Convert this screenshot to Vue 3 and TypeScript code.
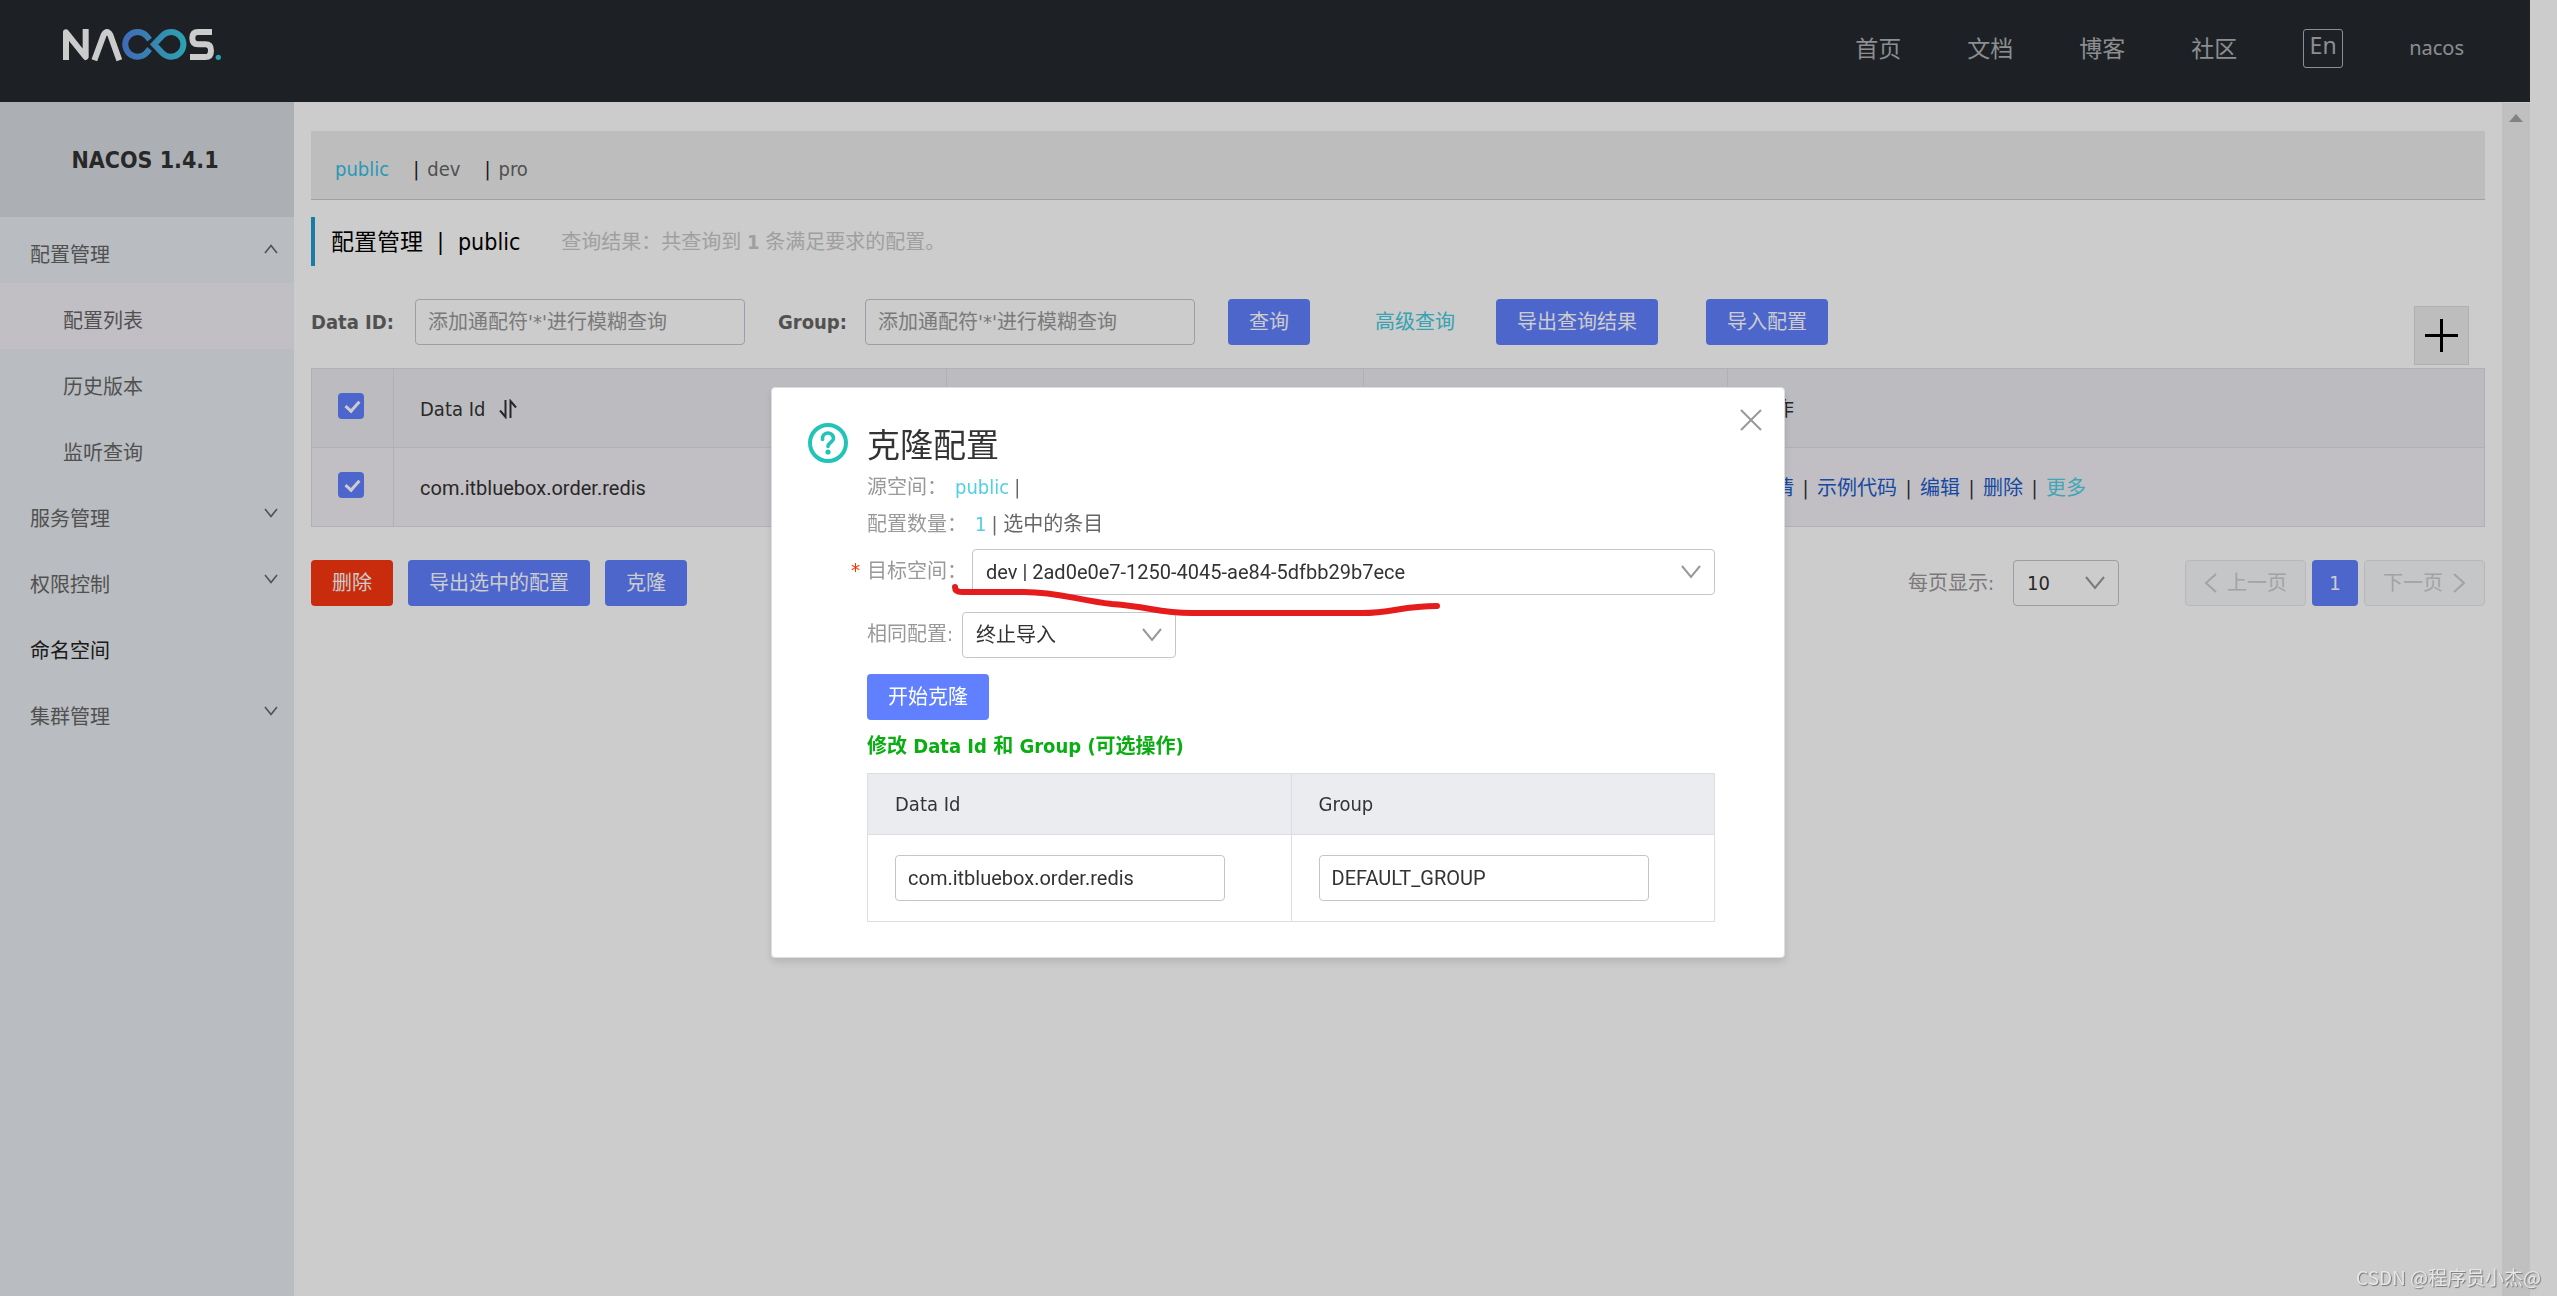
<script setup lang="ts">
import { ref } from 'vue'

interface MenuItem {
  label: string
  kind: 'group' | 'child' | 'plain'
  open?: boolean
  active?: boolean
}

const menu: MenuItem[] = [
  { label: '配置管理', kind: 'group', open: true },
  { label: '配置列表', kind: 'child', active: true },
  { label: '历史版本', kind: 'child' },
  { label: '监听查询', kind: 'child' },
  { label: '服务管理', kind: 'group' },
  { label: '权限控制', kind: 'group' },
  { label: '命名空间', kind: 'plain' },
  { label: '集群管理', kind: 'group' },
]

const navLinks: string[] = ['首页', '文档', '博客', '社区']
const rowActions: string[] = ['详情', '示例代码', '编辑', '删除']

const dataId = ref('')
const group = ref('')
const allChecked = ref(true)
const rowChecked = ref(true)
const pageSize = ref('10')
const targetSpace = ref('dev | 2ad0e0e7-1250-4045-ae84-5dfbb29b7ece')
const policy = ref('终止导入')
const cloneDataId = ref('com.itbluebox.order.redis')
const cloneGroup = ref('DEFAULT_GROUP')
</script>

<template>
  <div class="page">
    <div class="shell">
      <header class="topbar">
        <a href="#" class="logo" aria-label="NACOS">
          <svg width="200" height="70" viewBox="0 0 600 210" fill="none" stroke-width="18">
            <defs>
              <linearGradient id="loop" gradientUnits="userSpaceOnUse" x1="245" y1="0" x2="442" y2="0">
                <stop offset="0" stop-color="#5284e6" />
                <stop offset="1" stop-color="#36cddb" />
              </linearGradient>
            </defs>
            <g stroke="#fff" stroke-linejoin="round">
              <path d="M78 150V67L137 141V57" />
              <path d="M163 151L191 75Q201 57 211 75L238 151" />
              <path d="M516 66H474Q457 66 457 84Q457 103 474 103H496Q513 103 513 122Q513 141 496 141H450" />
            </g>
            <g stroke="url(#loop)">
              <path d="M329 89L319 77A37 37 0 1 0 319 129L329 117" />
              <path d="M342 103L368 76A37 37 0 1 1 368 130Z" />
            </g>
            <circle cx="535" cy="142" r="8" fill="#36cddb" />
          </svg>
        </a>
        <nav class="topnav">
          <a v-for="l in navLinks" :key="l" href="#">{{ l }}</a>
          <button type="button" class="lang">En</button>
          <a href="#" class="user">nacos</a>
        </nav>
      </header>

      <div class="columns">
        <aside class="sidebar">
          <h1>NACOS 1.4.1</h1>
          <ul>
            <li v-for="m in menu" :key="m.label" :class="[m.kind, { active: m.active }]">
              <a href="#">{{ m.label }}</a>
              <svg v-if="m.kind === 'group'" width="14" height="10" viewBox="0 0 14 10" fill="none" stroke="#666" stroke-width="1.6">
                <path :d="m.open ? 'M1 9L7 1.5L13 9' : 'M1 1L7 8.500L13 1'" />
              </svg>
            </li>
          </ul>
        </aside>

        <main class="content">
          <div class="spaces">
            <a href="#" class="current">public</a>
            <span class="bar">|</span><a href="#">dev</a>
            <span class="bar">|</span><a href="#">pro</a>
          </div>

          <div class="heading">
            <h2>配置管理<span class="sep">|</span>public</h2>
            <p>查询结果：共查询到 <b>1</b> 条满足要求的配置。</p>
          </div>

          <form class="filters" @submit.prevent>
            <label for="f-data">Data ID:</label>
            <input id="f-data" v-model="dataId" class="field" type="text" placeholder="添加通配符'*'进行模糊查询" />
            <label for="f-group" class="l2">Group:</label>
            <input id="f-group" v-model="group" class="field" type="text" placeholder="添加通配符'*'进行模糊查询" />
            <button type="submit" class="btn b1">查询</button>
            <a href="#" class="more">高级查询</a>
            <button type="button" class="btn">导出查询结果</button>
            <button type="button" class="btn b2">导入配置</button>
            <button type="button" class="plus" aria-label="新建配置">
              <svg width="33" height="33" viewBox="0 0 33 33" stroke="#000" stroke-width="3"><path d="M16.500 0V33M0 16.500H33" /></svg>
            </button>
          </form>

          <table class="grid">
            <colgroup>
              <col class="c-check" /><col class="c-id" /><col class="c-group" /><col class="c-app" /><col />
            </colgroup>
            <thead>
              <tr>
                <th class="tick"><input v-model="allChecked" type="checkbox" aria-label="全选" /></th>
                <th>
                  Data Id
                  <svg class="sort" width="18" height="20" viewBox="0 0 18 20" fill="none" stroke="#333" stroke-width="2">
                    <path d="M6.500 1V18L1 11.500M11.500 19V2L17 8.500" />
                  </svg>
                </th>
                <th></th>
                <th></th>
                <th>操作</th>
              </tr>
            </thead>
            <tbody>
              <tr>
                <td class="tick"><input v-model="rowChecked" type="checkbox" aria-label="选择" /></td>
                <td class="value">com.itbluebox.order.redis</td>
                <td></td>
                <td></td>
                <td>
                  <div class="actions">
                    <template v-for="a in rowActions" :key="a"><a href="#">{{ a }}</a><span>|</span></template>
                    <a href="#" class="cyan">更多</a>
                  </div>
                </td>
              </tr>
            </tbody>
          </table>

          <div class="footer">
            <button type="button" class="btn danger">删除</button>
            <button type="button" class="btn">导出选中的配置</button>
            <button type="button" class="btn">克隆</button>
            <div class="pager">
              <label for="size">每页显示:</label>
              <div class="select size">
                <select id="size" v-model="pageSize"><option>10</option></select>
                <svg width="20" height="14" viewBox="0 0 20 14" fill="none" stroke="#999" stroke-width="2"><path d="M1 1L10 12L19 1" /></svg>
              </div>
              <button type="button" class="page-btn" disabled>
                <svg width="13" height="20" viewBox="0 0 13 20" fill="none" stroke="#ccc" stroke-width="2"><path d="M12 1L2 10L12 19" /></svg>
                上一页
              </button>
              <button type="button" class="page-btn on">1</button>
              <button type="button" class="page-btn" disabled>
                下一页
                <svg width="13" height="20" viewBox="0 0 13 20" fill="none" stroke="#ccc" stroke-width="2"><path d="M1 1L11 10L1 19" /></svg>
              </button>
            </div>
          </div>
        </main>

        <div class="track">
          <svg width="14" height="8" viewBox="0 0 14 8" fill="#a3a3a3"><path d="M7 0L14 8H0Z" /></svg>
        </div>
      </div>
    </div>

    <div class="backdrop">
      <section class="dialog" role="dialog" aria-labelledby="dlg-title">
        <svg class="help" width="40" height="40" viewBox="0 0 40 40" fill="none" stroke="#23c4b8">
          <circle cx="20" cy="20" r="18" stroke-width="4" />
          <path d="M14.500 16.500V15.500A5.500 5.500 0 0 1 25.500 15.500C25.500 19 20 19.500 20 23.500" stroke-width="3.600" stroke-linecap="round" />
          <circle cx="20" cy="29" r="2.600" fill="#23c4b8" stroke="none" />
        </svg>
        <div class="body">
          <h3 id="dlg-title">克隆配置</h3>
          <div class="line"><span class="k">源空间：</span><span class="cyan num">public</span><span class="v">|</span></div>
          <div class="line"><span class="k">配置数量：</span><span class="cyan num">1</span><span class="v">| 选中的条目</span></div>
          <div class="row target">
            <span class="star">*</span>
            <label for="target">目标空间：</label>
            <div class="select wide">
              <select id="target" v-model="targetSpace" class="value"><option>dev | 2ad0e0e7-1250-4045-ae84-5dfbb29b7ece</option></select>
              <svg width="20" height="14" viewBox="0 0 20 14" fill="none" stroke="#999" stroke-width="2"><path d="M1 1L10 12L19 1" /></svg>
            </div>
          </div>
          <div class="row">
            <label for="policy">相同配置:</label>
            <div class="select policy">
              <select id="policy" v-model="policy"><option>终止导入</option></select>
              <svg width="20" height="14" viewBox="0 0 20 14" fill="none" stroke="#999" stroke-width="2"><path d="M1 1L10 12L19 1" /></svg>
            </div>
          </div>
          <button type="button" class="btn">开始克隆</button>
          <p class="hint">修改 Data Id 和 Group (可选操作)</p>
          <table class="edit">
            <thead>
              <tr><th>Data Id</th><th>Group</th></tr>
            </thead>
            <tbody>
              <tr>
                <td><input v-model="cloneDataId" class="field value" type="text" aria-label="Data Id" /></td>
                <td><input v-model="cloneGroup" class="field value" type="text" aria-label="Group" /></td>
              </tr>
            </tbody>
          </table>
        </div>
        <button type="button" class="close" aria-label="关闭">
          <svg width="22" height="22" viewBox="0 0 22 22" stroke="#999" stroke-width="2"><path d="M1 1L21 21M21 1L1 21" /></svg>
        </button>
        <svg class="scribble" width="500" height="40" viewBox="0 0 500 40" fill="none" stroke="#e61c1c" stroke-width="6" stroke-linecap="round">
          <path d="M3 10Q3 15 10 15H72C106 15 125 23 160 27C200 30 205 36 240 36H410C440 36 450 29 485 29" />
        </svg>
      </section>
    </div>

    <div class="mark">CSDN @程序员小杰@</div>
  </div>
</template>

<style>
body {
  margin: 0;
  background: #fff;
}
</style>

<style scoped>
.page,
.page button,
.page input,
.page select {
  font-family: "DejaVu Sans Condensed", "Noto Sans CJK SC", sans-serif;
  font-size: 20px;
  line-height: 28px;
}
.page .value {
  font-family: Roboto, "Noto Sans CJK SC", sans-serif;
}
.page *,
.page {
  box-sizing: border-box;
}
.page {
  color: #333;
}
a {
  color: inherit;
  text-decoration: none;
}
h1,
h2,
h3,
p,
ul {
  margin: 0;
  padding: 0;
}
svg {
  display: block;
  flex: none;
}
button {
  padding: 0;
  border: 0;
  background: none;
  cursor: pointer;
}
.shell {
  display: flex;
  flex-direction: column;
  min-height: 100vh;
  margin-right: 27px;
}
.topbar {
  display: flex;
  justify-content: space-between;
  height: 102px;
  padding: 10px 66px 0 40px;
  background: #252a2f;
}
.topnav {
  display: flex;
  align-items: center;
  gap: 66px;
  height: 76px;
  color: #b0b2b4;
}
.topnav a,
.topnav .lang {
  font-family: "Noto Sans", "Noto Sans CJK SC", sans-serif;
  font-size: 23px;
}
.topnav .user {
  font-size: 20px;
}
.topnav .lang {
  width: 40px;
  height: 39px;
  padding-bottom: 6px;
  border: 1px solid #b0b2b4;
  border-radius: 3px;
  color: #b0b2b4;
}
.columns {
  display: flex;
  flex: 1;
}
.sidebar {
  flex: none;
  width: 294px;
  background: #e8ecf0;
}
.sidebar h1 {
  height: 115px;
  padding-right: 4px;
  background: #d8dde3;
  font-size: 23px;
  line-height: 116px;
  text-align: center;
}
.sidebar ul {
  list-style: none;
}
.sidebar li {
  display: flex;
  align-items: center;
  justify-content: space-between;
  height: 66px;
  padding: 9px 16px 0 30px;
  color: #666;
}
.sidebar li svg {
  margin-bottom: 12px;
}
.sidebar li.child {
  padding-left: 63px;
}
.sidebar li.plain {
  color: #222;
}
.sidebar li.active {
  background: #f2eff6;
}
.content {
  flex: 1;
  min-width: 0;
  padding: 29px 17px 0;
}
.spaces {
  display: flex;
  align-items: center;
  height: 69px;
  padding: 7px 24px 0;
  border-bottom: 1px solid #c8c8c8;
  background: #ededed;
  color: #666;
}
.spaces .current {
  color: #33c0e5;
}
.spaces .bar {
  margin: 0 8px 0 24px;
  color: #222;
}
.heading {
  display: flex;
  align-items: center;
  gap: 41px;
  height: 49px;
  margin-top: 17px;
  padding-left: 16px;
  border-left: 4px solid #209bcf;
}
.heading h2 {
  font-size: 23px;
  font-weight: 400;
  color: #000;
}
.heading .sep {
  margin: 0 14px;
}
.heading p {
  color: #c8c8c8;
}
.filters {
  display: flex;
  align-items: flex-start;
  height: 81px;
  margin-top: 21px;
  padding-top: 12px;
}
.filters label {
  width: 104px;
  color: #666;
  font-weight: 700;
}
.filters label,
.filters .more {
  line-height: 47px;
}
.filters .l2 {
  width: 87px;
  margin-left: 33px;
}
.field {
  width: 330px;
  height: 46px;
  padding: 0 12px;
  border: 1px solid #c4c6cf;
  border-radius: 4px;
  background: transparent;
  color: #333;
  outline: none;
}
.field::placeholder {
  color: #999;
  opacity: 1;
}
.btn {
  height: 46px;
  padding: 0 21px;
  border-radius: 4px;
  background: #6080ff;
  color: #fff;
  white-space: nowrap;
}
.btn.danger {
  background: #fa3810;
}
.filters .b1 {
  margin-left: 33px;
}
.filters .b2 {
  margin-left: 48px;
}
.filters .more {
  margin: 0 41px 0 65px;
  color: #45cbe0;
}
.filters .plus {
  display: flex;
  align-items: center;
  justify-content: center;
  align-self: flex-end;
  width: 55px;
  height: 59px;
  margin: 0 16px 3px auto;
  border: 1px solid #dcdcdc;
  background: #ededed;
}
table {
  width: 100%;
  table-layout: fixed;
  border-collapse: collapse;
}
th,
td {
  border: 1px solid #dcdee3;
  text-align: left;
  font-weight: 400;
}
th {
  background: #ebecf0;
}
.grid th,
.grid td {
  height: 79px;
  padding: 2px 26px 0;
}
.grid td {
  background: #f2eff6;
}
.c-check {
  width: 82px;
}
.c-id {
  width: 553px;
}
.c-group {
  width: 417px;
}
.c-app {
  width: 364px;
}
.sort {
  display: inline-block;
  margin-left: 8px;
  vertical-align: -3px;
}
.grid .tick {
  padding: 0 0 5px 26px;
}
.tick input {
  display: block;
  appearance: none;
  width: 26px;
  height: 26px;
  margin: 0;
  border-radius: 4px;
  background: #6080ff;
}
.tick input:checked::after {
  content: "";
  display: block;
  width: 6px;
  height: 11px;
  margin: 5px 0 0 10px;
  border: solid #fff;
  border-width: 0 3px 3px 0;
  transform: rotate(42deg);
}
.actions {
  display: flex;
  gap: 8px;
  white-space: nowrap;
}
.actions a {
  color: #205cc8;
}
.actions span {
  width: 7px;
  text-align: center;
}
.cyan,
.actions .cyan {
  color: #4fd0e4;
}
.footer {
  display: flex;
  gap: 15px;
  margin-top: 33px;
}
.pager {
  display: flex;
  align-items: center;
  gap: 6px;
  margin-left: auto;
}
.pager label {
  margin-right: 13px;
  color: #999;
}
.select {
  position: relative;
  height: 46px;
}
.select select {
  appearance: none;
  width: 100%;
  height: 46px;
  padding: 0 13px;
  border: 1px solid #c4c6cf;
  border-radius: 4px;
  background: transparent;
  color: #333;
}
.select svg {
  position: absolute;
  top: 16px;
  right: 14px;
  pointer-events: none;
}
.size {
  width: 106px;
  margin-right: 60px;
}
.page-btn {
  display: flex;
  align-items: center;
  justify-content: center;
  gap: 10px;
  width: 121px;
  height: 46px;
  border: 1px solid #e6e7eb;
  border-radius: 4px;
  background: #f7f8fa;
  color: #ccc;
}
.page-btn.on {
  width: 46px;
  border: 0;
  background: #6080ff;
  color: #fff;
}
.track {
  display: flex;
  justify-content: center;
  flex: none;
  width: 28px;
  margin-top: 1px;
  padding-top: 11px;
  background: #f1f1f1;
}
.backdrop {
  position: fixed;
  inset: 0;
  display: flex;
  align-items: center;
  justify-content: center;
  padding: 49px 1px 0 0;
  background: rgba(0, 0, 0, 0.2);
}
.dialog {
  position: relative;
  display: flex;
  gap: 19px;
  width: 1014px;
  max-width: 100%;
  padding: 35px 69px 35px 36px;
  border: 1px solid #dcdee3;
  border-radius: 4px;
  background: #fff;
  box-shadow: 0 4px 8px rgba(0, 0, 0, 0.12);
}
.body {
  flex: 1;
}
.body h3 {
  font-size: 33px;
  font-weight: 400;
  line-height: 46px;
}
.line {
  height: 37px;
  line-height: 36px;
  color: #666;
}
.line .k,
.row label {
  color: #999;
}
.line .num {
  margin: 0 5px 0 8px;
}
.row {
  display: flex;
  margin-bottom: 16px;
}
.row label {
  width: 95px;
  line-height: 44px;
}
.row.target {
  position: relative;
  margin-top: 6px;
  margin-bottom: 17px;
}
.row.target label {
  width: 105px;
}
.star {
  position: absolute;
  left: -16px;
  top: 7px;
  color: #ff3000;
}
.wide {
  flex: 1;
}
.policy {
  width: 214px;
}
.hint {
  color: #0aad12;
  font-weight: 700;
  line-height: 53px;
}
.edit th {
  height: 61px;
  padding: 0 27px;
}
.edit td {
  height: 87px;
  padding: 0 27px;
}
.edit .field {
  display: block;
}
.close {
  position: absolute;
  top: 21px;
  right: 22px;
}
.scribble {
  position: absolute;
  left: 180px;
  top: 189px;
  pointer-events: none;
}
.mark {
  position: fixed;
  right: 16px;
  bottom: 5px;
  color: #e6e6e6;
  font-family: "Noto Sans CJK SC", sans-serif;
  font-size: 19px;
  text-shadow: 1px 1px 1px #777;
}
</style>
